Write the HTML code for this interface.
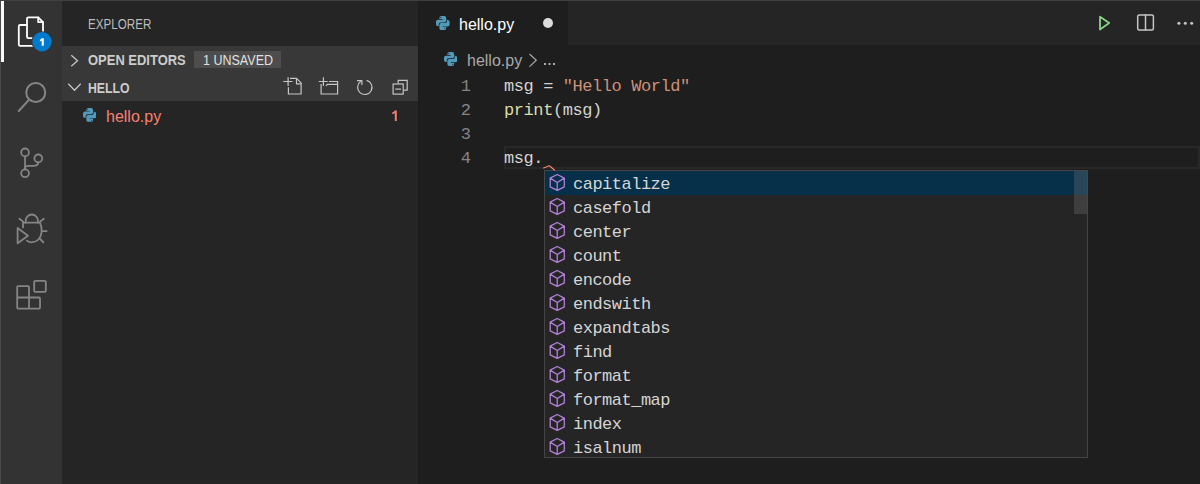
<!DOCTYPE html>
<html><head><meta charset="utf-8">
<style>
*{margin:0;padding:0;box-sizing:border-box}
html,body{width:1200px;height:484px;overflow:hidden;background:#1e1e1e;font-family:"Liberation Sans",sans-serif}
.abs{position:absolute}
#top{left:0;top:0;width:1200px;height:1px;background:#404040}
#act{left:0;top:1px;width:62px;height:483px;background:#333333}
#actl{left:0;top:1px;width:1px;height:483px;background:#4a4a4a}
#ind{left:1px;top:1px;width:3px;height:61px;background:#f8f8f8}
#side{left:62px;top:1px;width:356px;height:483px;background:#252526}
#sh1{left:62px;top:46px;width:356px;height:55px;background:#383838}
.ui{position:absolute;white-space:nowrap;transform-origin:0 0}
#tabs{left:418px;top:1px;width:782px;height:44px;background:#252526}
#tab{left:418px;top:1px;width:150px;height:44px;background:#1e1e1e}
.mono{font-family:"Liberation Mono",monospace}
.ln{position:absolute;color:#858585;font-size:17px;width:20px;text-align:right;left:451px}
.code{position:absolute;left:504px;font-size:17px;letter-spacing:-0.42px;color:#d4d4d4;white-space:pre}
#curl{left:504px;top:146px;width:696px;height:23px;border:2px solid #282828}
#sug{left:544px;top:170px;width:544px;height:288px;background:#252526;border:1px solid #454545}
#sel{left:545px;top:171px;width:542px;height:24px;background:#062f4a}
#sb{left:1074px;top:171px;width:13px;height:43px;background:rgba(121,121,121,0.3)}
.item{position:absolute;left:573px;font-size:17px;letter-spacing:-0.5px;color:#d4d4d4;white-space:pre}
.cube{position:absolute;left:549px;width:17px;height:18px}
</style></head><body>
<div id="top" class="abs"></div>
<div id="act" class="abs"></div>
<div id="actl" class="abs"></div>
<div id="ind" class="abs"></div>
<div id="side" class="abs"></div>
<div id="sh1" class="abs"></div>
<div id="tabs" class="abs"></div>
<div id="tab" class="abs"></div>
<div class="abs" style="left:418px;top:1px;width:1px;height:483px;background:#1b1b1b"></div>

<!-- sidebar texts -->
<div class="ui" style="left:88px;top:16px;font-size:14px;color:#bbbbbb;transform:scaleX(0.83)">EXPLORER</div>
<div class="ui" style="left:88px;top:52px;font-size:14px;font-weight:bold;color:#cccccc;transform:scaleX(0.926)">OPEN EDITORS</div>
<div class="abs" style="left:194px;top:51px;width:87px;height:17px;background:#4d4d4d"></div>
<div class="ui" style="left:203px;top:52px;font-size:14px;color:#e0e0e0;transform:scaleX(0.894)">1 UNSAVED</div>
<div class="ui" style="left:88px;top:80px;font-size:14px;font-weight:bold;color:#cccccc;transform:scaleX(0.877)">HELLO</div>
<div class="ui" style="left:106px;top:107.5px;font-size:16px;color:#f88070">hello.py</div>


<!-- tab -->
<div class="ui" style="left:459px;top:16px;font-size:16px;color:#ffffff">hello.py</div>
<div class="abs" style="left:543px;top:18px;width:10px;height:10px;border-radius:50%;background:#dcdcdc"></div>
<!-- breadcrumb -->
<div class="ui" style="left:467px;top:52px;font-size:16px;color:#a9a9a9">hello.py</div>

<!-- editor -->
<div id="curl" class="abs"></div>
<div class="ln mono" style="top:77px">1</div>
<div class="ln mono" style="top:101px">2</div>
<div class="ln mono" style="top:125px">3</div>
<div class="ln mono" style="top:149px">4</div>
<div class="code mono" style="top:77px">msg = <span style="color:#ce9178">"Hello World"</span></div>
<div class="code mono" style="top:101px"><span style="color:#dcdcaa">print</span>(msg)</div>
<div class="code mono" style="top:149px">msg.</div>

<!-- suggest -->
<div id="sug" class="abs"></div>
<div id="sel" class="abs"></div>
<div id="sb" class="abs"></div>
<div class="item mono" style="top:175px">capitalize</div>
<div class="item mono" style="top:199px">casefold</div>
<div class="item mono" style="top:223px">center</div>
<div class="item mono" style="top:247px">count</div>
<div class="item mono" style="top:271px">encode</div>
<div class="item mono" style="top:295px">endswith</div>
<div class="item mono" style="top:319px">expandtabs</div>
<div class="item mono" style="top:343px">find</div>
<div class="item mono" style="top:367px">format</div>
<div class="item mono" style="top:391px">format_map</div>
<div class="item mono" style="top:415px">index</div>
<div class="item mono" style="top:439px">isalnum</div>

<svg class="abs" style="left:0;top:0" width="1200" height="484" viewBox="0 0 1200 484" fill="none" stroke-linecap="round" stroke-linejoin="round">
 <!-- files icon -->
 <g stroke="#ffffff" stroke-width="1.8">
  <path d="M33,38.2 H28.4 Q27,38.2 27,36.8 V18.7 Q27,17.3 28.4,17.3 H38.2 L43,22.2 V32"/>
  <path d="M38.2,17.3 V22.2 H43"/>
  <path d="M27,25 H20.2 Q18.8,25 18.8,26.4 V44.5 Q18.8,45.9 20.2,45.9 H33"/>
 </g>
 <circle cx="42" cy="41.7" r="10.4" fill="#333333"/>
 <circle cx="42" cy="41.7" r="9.7" fill="#007acc"/>
 <!-- search -->
 <g stroke="#858585" stroke-width="2">
  <circle cx="35.75" cy="92.5" r="9.5"/>
  <path d="M18.8,111 L28.6,100.1"/>
 </g>
 <!-- scm -->
 <g stroke="#858585" stroke-width="1.8">
  <circle cx="25.05" cy="152.4" r="3.9"/>
  <circle cx="38.3" cy="158.4" r="3.9"/>
  <circle cx="25.05" cy="173.3" r="3.9"/>
  <path d="M25.05,156.3 V169.4"/>
  <path d="M38.3,162.3 Q38,165.8 33.5,165.8 H28.5 Q25.05,165.8 25.05,168"/>
 </g>
 <!-- debug -->
 <g stroke="#858585" stroke-width="1.8">
  <path d="M25.7,222.7 V220.6 A6.1,6.1 0 0 1 37.9,220.6 V222.7"/>
  <path d="M23,222.7 H40 Q42,227 41.6,232 Q40.5,241.5 31.8,242.3 Q29,242.3 26.9,240.6"/>
  <path d="M23,222.7 V227.4"/>
  <path d="M19.4,218.7 L23.2,221.6 M43.8,218.7 L40.1,221.6 M42.2,231.1 H46.7 M40.1,239 L43.4,242.3"/>
  <path d="M17.6,228 V243.3 L28,235.7 Z"/>
 </g>
 <!-- extensions -->
 <g stroke="#858585" stroke-width="1.8">
  <rect x="34.2" y="280.8" width="11.6" height="11" rx="1"/>
  <path d="M17.2,297.5 V287 Q17.2,286.1 18.1,286.1 H28.1 Q29,286.1 29,287 V307.8 M17.2,297.5 V307.8 Q17.2,308.7 18.1,308.7 H39.1 Q40,308.7 40,307.8 V298.4 Q40,297.5 39.1,297.5 H17.2"/>
 </g>
 <!-- sidebar chevrons -->
 <g stroke="#c5c5c5" stroke-width="1.3" stroke-linecap="butt" stroke-linejoin="miter">
  <path d="M71.3,55.3 L77.5,60.8 L71.3,66.3"/>
  <path d="M68.3,83.8 L74.5,90.2 L80.7,83.8"/>
 </g>
 <!-- explorer actions -->
 <g stroke="#c5c5c5" stroke-width="1.2" stroke-linecap="butt" stroke-linejoin="miter">
  <path d="M283.2,81.5 H292.5 M288.1,77.2 V85.9"/>
  <path d="M290,78.4 H296.5 L301.1,82.9 V94 H288.4 V87.3"/>
  <path d="M296.5,78.4 V83.9 H301.1"/>
  <path d="M318.8,81.5 H327.7 M323.4,77.2 V85.9"/>
  <path d="M329,81.5 H337.6 V94 H321.1 V84"/>
  <path d="M326,85.9 L327.4,84.4 H337.6"/>
  <path d="M366.6,80.3 A7.2,7.2 0 1 1 360.8,81.3"/>
  <path d="M357,80.6 H361.9 V85"/>
  <path d="M398.2,83.4 V80.4 H407.2 V90.2 H404"/>
  <rect x="393.1" y="84" width="10.1" height="10.1"/>
  <path d="M395.3,89.1 H401"/>
 </g>
 <!-- editor actions -->
 <path d="M1100,16.8 V29.5 L1109.2,23.1 Z" stroke="#89d185" stroke-width="1.8"/>
 <g stroke="#c5c5c5" stroke-width="1.5">
  <rect x="1137.7" y="15" width="15.7" height="15.1" rx="1.5"/>
  <path d="M1145.5,15 V30.1"/>
 </g>
 <g fill="#c5c5c5">
  <circle cx="1178.9" cy="23.3" r="1.5"/><circle cx="1185.3" cy="23.3" r="1.5"/><circle cx="1191.7" cy="23.3" r="1.5"/>
 </g>
 <!-- squiggle -->
 <path d="M543.6,168 L549.3,165.8 L554.5,170" stroke="#f48771" stroke-width="1.2"/>
</svg>


<svg class="abs" style="left:0;top:0" width="1200" height="484" viewBox="0 0 1200 484">
 <path d="M41.6,38.2 H43.8 V45.8 H41.7 V40.6 Q40.9,41.2 39.9,41.5 V39.7 Q41,39.2 41.6,38.2 Z" fill="#ffffff"/>
 <path d="M394.9,110.6 H396.8 V121 H394.8 V113.2 Q393.6,113.9 392.2,114.2 V112.6 Q394,112 394.9,110.6 Z" fill="#f08070"/>
</svg>

<svg width="0" height="0" style="position:absolute"><defs>
 <g id="py"><path d="M9.86 2A2.86 2.86 0 0 0 7 4.86v1.68h4.29c.39 0 .71.57.71.96H4.86A2.86 2.86 0 0 0 2 10.36v3.781a2.86 2.86 0 0 0 2.86 2.86h1.18v-2.68a2.85 2.85 0 0 1 2.85-2.86h5.25c1.58 0 2.86-1.271 2.86-2.851V4.86A2.86 2.86 0 0 0 14.14 2zm-.72 1.61c.4 0 .72.12.72.71s-.32.891-.72.891c-.39 0-.71-.3-.71-.891s.32-.71.71-.71z"/><path d="M17.959 7v2.68a2.85 2.85 0 0 1-2.85 2.86H9.86A2.85 2.85 0 0 0 7 15.389v4.75A2.86 2.86 0 0 0 9.86 23h4.28A2.86 2.86 0 0 0 17 20.14v-1.68h-4.291c-.39 0-.709-.57-.709-.96h7.14A2.86 2.86 0 0 0 22 14.64v-3.78A2.86 2.86 0 0 0 19.14 8zM14.86 19.82c.39 0 .71.3.71.89s-.32.711-.71.711c-.4 0-.72-.121-.72-.711s.32-.89.72-.89z"/></g>
</defs></svg>
<svg class="abs" style="left:436px;top:15.9px" width="13.6" height="14.2" viewBox="2 2 20 21" preserveAspectRatio="none" fill="#519aba"><use href="#py"/></svg>
<svg class="abs" style="left:443.8px;top:52px" width="13.5" height="14" viewBox="2 2 20 21" preserveAspectRatio="none" fill="#519aba"><use href="#py"/></svg>
<svg class="abs" style="left:83px;top:108px" width="13.4" height="13.8" viewBox="2 2 20 21" preserveAspectRatio="none" fill="#519aba"><use href="#py"/></svg>
<svg class="abs" style="left:0;top:0" width="1200" height="484" viewBox="0 0 1200 484" fill="none">
 <path d="M529.5,54 L536.3,60.3 L529.5,66.6" stroke="#a9a9a9" stroke-width="1.2"/>
 <g fill="#a9a9a9"><rect x="544" y="63" width="2" height="2"/><rect x="548.5" y="63" width="2" height="2"/><rect x="553" y="63" width="2" height="2"/></g>
</svg>
<svg class="abs" style="left:0;top:0" width="1200" height="484" viewBox="0 0 1200 484" fill="none" stroke="#b180d7" stroke-width="1.3" stroke-linejoin="round">
 <g transform="translate(549.5,173.8)"><path d="M7.75,0.7 L14.8,4.3 V13.1 L7.75,16.6 L0.7,13.1 V4.3 Z M0.7,4.3 L7.75,8.7 L14.8,4.3 M7.75,8.7 V16.6"/></g>
 <g transform="translate(549.5,197.8)"><path d="M7.75,0.7 L14.8,4.3 V13.1 L7.75,16.6 L0.7,13.1 V4.3 Z M0.7,4.3 L7.75,8.7 L14.8,4.3 M7.75,8.7 V16.6"/></g>
 <g transform="translate(549.5,221.8)"><path d="M7.75,0.7 L14.8,4.3 V13.1 L7.75,16.6 L0.7,13.1 V4.3 Z M0.7,4.3 L7.75,8.7 L14.8,4.3 M7.75,8.7 V16.6"/></g>
 <g transform="translate(549.5,245.8)"><path d="M7.75,0.7 L14.8,4.3 V13.1 L7.75,16.6 L0.7,13.1 V4.3 Z M0.7,4.3 L7.75,8.7 L14.8,4.3 M7.75,8.7 V16.6"/></g>
 <g transform="translate(549.5,269.8)"><path d="M7.75,0.7 L14.8,4.3 V13.1 L7.75,16.6 L0.7,13.1 V4.3 Z M0.7,4.3 L7.75,8.7 L14.8,4.3 M7.75,8.7 V16.6"/></g>
 <g transform="translate(549.5,293.8)"><path d="M7.75,0.7 L14.8,4.3 V13.1 L7.75,16.6 L0.7,13.1 V4.3 Z M0.7,4.3 L7.75,8.7 L14.8,4.3 M7.75,8.7 V16.6"/></g>
 <g transform="translate(549.5,317.8)"><path d="M7.75,0.7 L14.8,4.3 V13.1 L7.75,16.6 L0.7,13.1 V4.3 Z M0.7,4.3 L7.75,8.7 L14.8,4.3 M7.75,8.7 V16.6"/></g>
 <g transform="translate(549.5,341.8)"><path d="M7.75,0.7 L14.8,4.3 V13.1 L7.75,16.6 L0.7,13.1 V4.3 Z M0.7,4.3 L7.75,8.7 L14.8,4.3 M7.75,8.7 V16.6"/></g>
 <g transform="translate(549.5,365.8)"><path d="M7.75,0.7 L14.8,4.3 V13.1 L7.75,16.6 L0.7,13.1 V4.3 Z M0.7,4.3 L7.75,8.7 L14.8,4.3 M7.75,8.7 V16.6"/></g>
 <g transform="translate(549.5,389.8)"><path d="M7.75,0.7 L14.8,4.3 V13.1 L7.75,16.6 L0.7,13.1 V4.3 Z M0.7,4.3 L7.75,8.7 L14.8,4.3 M7.75,8.7 V16.6"/></g>
 <g transform="translate(549.5,413.8)"><path d="M7.75,0.7 L14.8,4.3 V13.1 L7.75,16.6 L0.7,13.1 V4.3 Z M0.7,4.3 L7.75,8.7 L14.8,4.3 M7.75,8.7 V16.6"/></g>
 <g transform="translate(549.5,437.8)"><path d="M7.75,0.7 L14.8,4.3 V13.1 L7.75,16.6 L0.7,13.1 V4.3 Z M0.7,4.3 L7.75,8.7 L14.8,4.3 M7.75,8.7 V16.6"/></g>
</svg>
</body></html>
